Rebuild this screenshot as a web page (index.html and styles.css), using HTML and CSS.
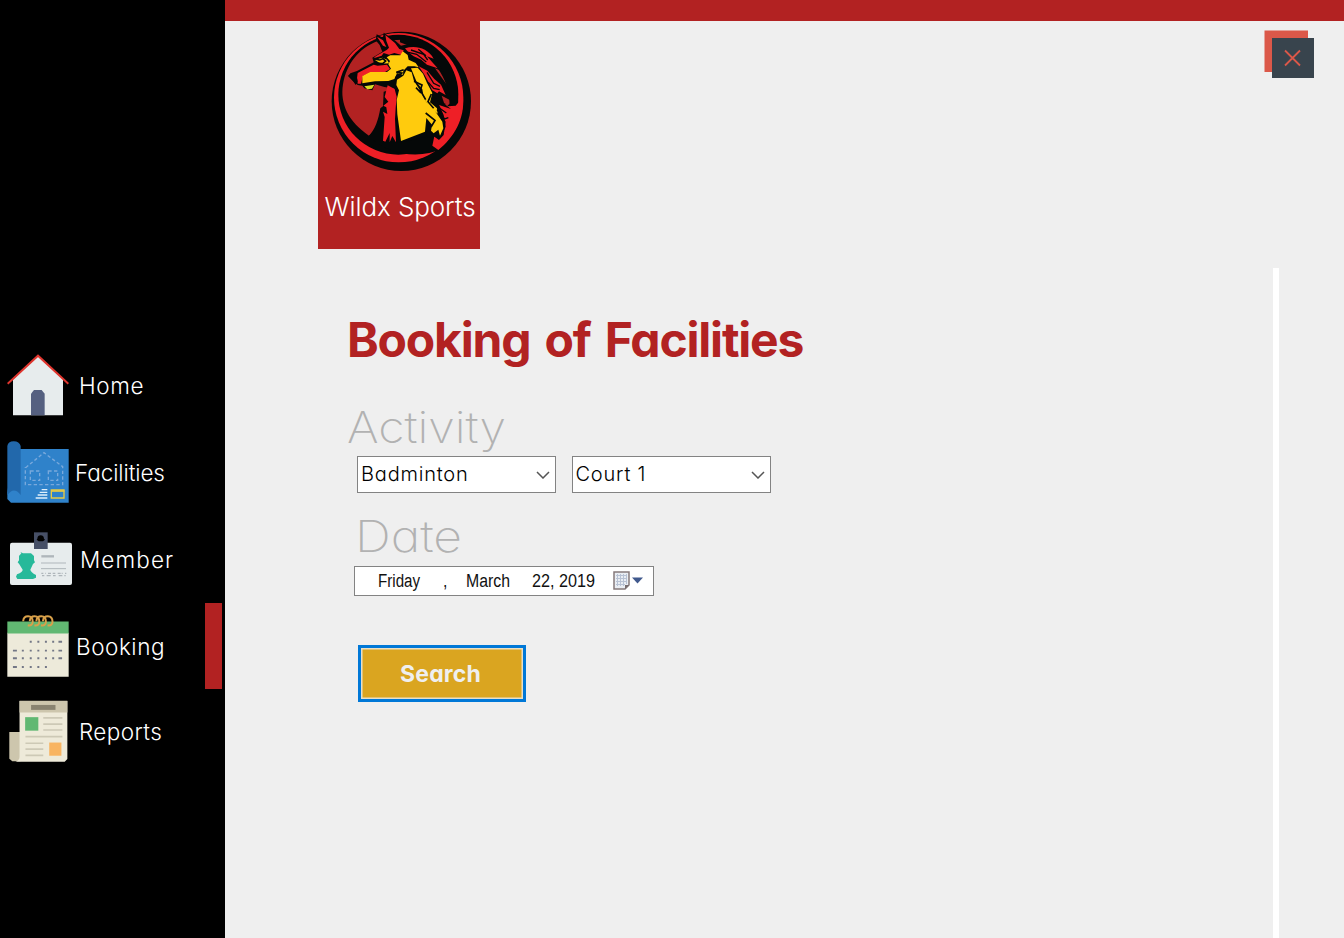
FILE: index.html
```html
<!DOCTYPE html>
<html lang="en">
<head>
<meta charset="utf-8">
<title>Wildx Sports</title>
<link rel="stylesheet" href="styles.css">
</head>
<body>
<div class="app">
  <nav class="sidebar">
    <a class="nav-item home">
      <svg class="nav-icon" viewBox="0 0 186 186"><path fill="#e7eced" d="M18 76 93 6l75 70v108H18z"/><path fill="#556080" d="M72 184v-65l9-11h23l9 11v65z"/><path fill="none" stroke="#df352e" stroke-width="6" d="M2 89 93 5l91 84"/></svg>
      <span class="nav-label">Home</span>
    </a>
    <a class="nav-item facilities">
      <svg class="nav-icon" viewBox="0 0 186 186"><path fill="#2f82ca" d="M20 24h165v161H12L1 174v-20z"/><path fill="#2268ab" d="M1 163V15Q3 1 20 1t21 14v147Q20 135 1 163z"/><g fill="none" stroke="#79a9dc" stroke-width="4" stroke-dasharray="10 7"><path d="M56 80 111 35l56 42v54H55V78"/><path d="M70 90h28v28H70zM124 90h28v28h-28z"/></g><path d="M104 146h17M98 154h23M92 162h29M86 171h35" stroke="#e0f0fc" stroke-width="4"/><path fill="none" stroke="#e9cb43" stroke-width="4" d="M133 147h38v24h-38z"/><path stroke="#e9cb43" stroke-width="5" d="M132 150h40"/></svg>
      <span class="nav-label">Facilities</span>
    </a>
    <a class="nav-item member">
      <svg class="nav-icon" viewBox="0 0 186 160"><rect y="31" width="186" height="127" rx="6" fill="#e7eced"/><path fill="#464f66" d="M72 0h41v50H72z"/><path fill="#000" d="M82 19q1-10 10-10t10 10l3 3-6 5H86l-6-5z"/><path fill="#27b99a" d="m31 59 8 4h24l9 8v13l3 6-6 5-8 17q1 7 17 16v8l-9 4H22l-4-7 3-7q18-8 17-14l-10-16-5-6 4-6V71l7-8z"/><path d="M94 72h38" stroke="#afb6bb" stroke-width="7"/><path d="M93 92h75M93 109h75" stroke="#afb6bb" stroke-width="3"/><path d="M94 123h6m6 0h2m6 0h9m5 0h8m7 0h9m3 0h3m7 0h4M96 130h7m7 0h12m7 0h8m9 0h11m6 0h4" stroke="#afb6bb" stroke-width="4"/></svg>
      <span class="nav-label">Member</span>
    </a>
    <a class="nav-item booking">
      <svg class="nav-icon" viewBox="0 0 186 188"><path fill="#edeada" d="M0 54h186v133H0z"/><path fill="#61b872" d="M0 20h186v36H0z"/><g fill="none" stroke="#d8a04a" stroke-width="6"><path id="ring" d="M48 19q1-15 15-15t14 17q-1 13-15 10"/><use href="#ring" x="20"/><use href="#ring" x="40"/><use href="#ring" x="60"/></g><path d="M68 81h6m17 0h6m17 0h6m16 0h6m13 0h11M17 108h12m15 0h6m18 0h6m17 0h6m17 0h6m16 0h6m13 0h11M17 131h12m15 0h6m18 0h6m17 0h6m17 0h6m16 0h6m13 0h11M17 158h12m15 0h6m18 0h6m17 0h6m17 0h6" stroke="#737786" stroke-width="6"/></svg>
      <span class="nav-label">Booking</span>
      <span class="active-mark"></span>
    </a>
    <a class="nav-item reports">
      <svg class="nav-icon" viewBox="0 0 180 188"><path fill="#cdc6ad" d="M3 97h34v89H12l-9-8z"/><path fill="#eeead9" d="M34 3h145v176l-8 8H22q12-4 12-15z"/><path fill="#cdc6ad" d="M34 2h145v36H34z"/><path fill="#898370" d="M69 15h74v15H69z"/><path fill="#61b872" d="M51 52h40v41H51z"/><path fill="#f8b461" d="M124 129h37v40h-37z"/><path stroke="#cdc9b6" stroke-width="5" d="M106 54h58m-58 19h58m-58 18h58M52 111h112M52 131h54m-54 18h54m-54 19h54"/></svg>
      <span class="nav-label">Reports</span>
    </a>
  </nav>
  <main class="main">
    <header class="top">
      <div class="brand">
        <svg class="logo" viewBox="0 0 456 456">
          <circle cx="229" cy="229" r="209" fill="#050808"/>
          <circle cx="221" cy="218" r="194" fill="#ee1f26"/>
          <circle cx="220" cy="209" r="180" fill="#050808"/>
          <path fill="#b22222" d="M132 332C72 292 44 238 54 178 64 118 100 70 158 48L230 44C300 56 358 98 376 160L386 226 300 300H170z"/>
          <path fill="#050808" d="M225 30C310 40 384 90 398 190L400 240 374 240C372 160 330 90 225 52z"/>
          <path fill="#050808" d="M132 332C150 315 160 285 166 250L174 244 176 200 250 180 340 220 376 250 345 345 350 372C290 400 190 395 132 332z"/>
          <path fill="#ee1f26" d="M330 212 370 244 392 242 414 215C420 280 388 336 340 375L322 362 328 334 346 340 362 305 356 270z"/>
          <path fill="#050808" d="M155 28 174 38 176 23 212 48 228 62C265 52 300 66 325 90L356 140 330 130 366 180 380 228 350 212 358 236 378 252 342 240 336 250 362 290 356 330 342 345 328 335 308 338 300 305 306 335 228 352 218 300 214 210 205 190 178 186 150 178 142 196 118 190 112 182 98 180 86 170 70 154 76 145 96 138 146 112 142 98 172 80 164 60 152 46z"/>
          <path fill="#ee1f26" d="M156 35 174 46 184 66 174 62zM181 30 210 54 223 72 236 76 230 90 208 84 192 89 176 84 170 92 146 100 152 94 186 74 192 68 184 48z"/>
          <path fill="#ee1f26" d="M98 144 146 119 158 122 186 119 195 132 180 141 142 142 114 152 108 176 98 176 96 160z"/>
          <path fill="#ffcb0d" d="M112 153 136 141 186 141 198 131 190 118 195 108 185 97 196 91 226 91 233 79 248 90 251 104 272 114 281 127 268 124 248 124 235 137 234 149 216 145 208 162 190 168 150 169 112 175z"/>
          <path fill="#ffcb0d" d="M216 164 235 152 244 136 260 142 267 168 284 194 304 231 330 258 352 290 355 310 345 332 340 314 326 325 318 317 321 299 304 279 300 320 228 348 217 268 215 225 222 196 214 180z"/>
          <path fill="#ffcb0d" d="M258 130 278 128 294 146 306 174 322 204 315 232 336 250 338 266 313 246 296 218 292 193 276 173z"/>
          <path fill="#ffcb0d" d="M150 105 172 98 186 104 192 115 168 116z"/>
          <path fill="none" stroke="#050808" stroke-width="5" d="M147 102 164 105 174 101 182 108 173 116 160 115M211 159 230 144 214 142 236 134M267 169 291 180 286 196 302 224M273 188 288 204M302 264 330 286 318 306M319 207 309 230 326 250"/>
          <path fill="#ee1f26" d="M240 70C270 60 308 68 326 101L306 94 338 130 306 119 289 104 266 94 250 82zM281 124 307 137 328 162 348 179 362 210 342 199 337 205 321 195 309 169 297 147zM188 181 209 192 215 215 212 250 210 282 213 352 202 333 194 352 194 324 181 350 174 347 179 276 174 260 187 267 184 247 175 242 190 230 179 216z"/>
          <path fill="none" stroke="#050808" stroke-width="4" d="M258 75 296 88 308 105M240 80 275 88 304 111M280 73 303 92M306 142 326 175 345 184M310 172 326 190 344 194M326 218 344 232 361 238M334 242 364 264M336 254 359 282 370 278"/>
          <path fill="#d8dd25" d="M118 184 148 179 141 191 127 193z"/>
          <path fill="#050808" d="M69 152 76 147 95 151 98 170 92 180 84 168z"/>
        </svg>
        <div class="brand-name"><span>Wildx Sports</span></div>
      </div>
      <button class="close" aria-label="Close"><svg viewBox="0 0 50 48"><path fill="#db5849" d="M.5.500h43.500v41.500H.5z"/><path fill="#38444d" d="M8 8h42v40H8z"/><path stroke="#db5849" stroke-width="1.800" d="m21 20.500 15 15m0-15-15 15"/></svg></button>
    </header>
    <section class="content">
      <form class="form">
        <h1 class="title">Booking of Facilities</h1>
        <h2 class="label activity">Activity</h2>
        <div class="selects">
          <div class="select"><span class="badminton">Badminton</span><svg class="chevron" viewBox="0 0 14 8"><path d="m1 1 6 6 6-6"/></svg></div>
          <div class="select"><span class="court">Court 1</span><svg class="chevron" viewBox="0 0 14 8"><path d="m1 1 6 6 6-6"/></svg></div>
        </div>
        <h2 class="label date">Date</h2>
        <div class="datepicker">
          <span class="weekday">Friday</span><span class="comma">,</span><span class="month">March</span><span class="day">22, 2019</span>
          <svg class="calendar" viewBox="0 0 30 20"><path fill="#e9edf3" stroke="#85797b" stroke-width="1.500" d="M1 1h15v13l-4 4H1z"/><path stroke="#b8c2d4" d="M3 4.500h11M3 7.500h11M3 10.500h11M3 13.500h9M4.500 3v12m3-12v12m3-12v12m3-12v10"/><path fill="#766d70" d="M12 18v-4h4z"/><path fill="#40598d" d="M19 6.500h11l-5.500 6z"/></svg>
        </div>
        <button class="search" type="button"><span>Search</span></button>
      </form>
      <div class="rule"></div>
    </section>
  </main>
</div>
</body>
</html>
```
FILE: styles.css
```css
* { box-sizing: border-box; }
body { margin: 0; background: #efefef; font-family: Inter, "Open Sans", sans-serif; font-weight: 300; font-feature-settings: "cv11"; }
.app { display: flex; width: 1344px; height: 938px; overflow: hidden; }
.sidebar { width: 225px; background: #000; padding-top: 341px; display: flex; flex-direction: column; }
.nav-item { height: 87px; display: flex; align-items: center; color: #fff; padding-left: 7px; }
.nav-icon { width: 62px; height: 62px; flex: none; }
.nav-label { font-size: 22.500px; line-height: 30px; white-space: nowrap; margin-top: 2px; letter-spacing: .4px; }
.home .nav-label { margin-left: 10px; letter-spacing: .6px; }
.facilities .nav-label { margin-left: 6px; letter-spacing: -.1px; }
.member { padding-left: 10px; }
.member .nav-label { margin-left: 8px; letter-spacing: 1.100px; }
.member .nav-icon { height: 54px; margin-top: 1px; }
.booking .nav-label { margin-left: 7px; letter-spacing: .55px; }
.active-mark { width: 17px; height: 86px; background: #b22222; margin-left: auto; margin-right: 3px; margin-top: 1px; }
.reports .nav-icon { width: 60px; }
.reports { height: 84px; padding-left: 8px; }
.reports .nav-label { margin-left: 11px; }
.main { flex: 1; display: flex; flex-direction: column; }
.top { height: 249px; border-top: 21px solid #b22222; display: flex; justify-content: space-between; padding: 0 30px 0 93px; }
.brand { width: 162px; height: 228px; background: #b22222; color: #fff; display: flex; flex-direction: column; align-items: center; }
.logo { width: 152px; height: 152px; margin: 4px 0 0 4px; }
.brand-name { margin-top: 14px; padding-left: 2px; font-size: 26px; line-height: 32px; letter-spacing: -.1px; white-space: nowrap; }
.close { width: 50px; height: 48px; margin-top: 9px; padding: 0; border: 0; background: none; }
.close svg { display: block; width: 50px; height: 48px; }
.content { flex: 1; display: flex; justify-content: space-between; padding: 19px 65px 0 122px; }
.rule { width: 6px; background: #fff; }
.form { display: flex; flex-direction: column; align-items: flex-start; }
.title { margin: 42px 0 0; font-size: 48px; line-height: 60px; font-weight: 700; letter-spacing: -1.200px; word-spacing: 4px; color: #b22222; white-space: nowrap; }
.label { margin: 0; font-size: 43px; line-height: 50px; font-weight: 250; color: #b2b2b2; transform-origin: left; }
.activity { margin-top: 32px; transform: scaleX(1.12); }
.selects { display: flex; gap: 15.500px; margin: 4px 0 0 10px; }
.select { width: 199px; height: 37px; background: #fff; border: 1.500px solid #838383; padding: 0 5px 2px 3px; display: flex; justify-content: space-between; align-items: center; font-size: 20px; line-height: 28px; letter-spacing: .8px; color: #000; }
.chevron { width: 14px; height: 8px; margin-top: 3px; fill: none; stroke: #555; stroke-width: 1.500; }
.date { margin: 18px 0 0 8px; transform: scaleX(1.16); }
.datepicker { width: 300px; height: 30px; margin: 5px 0 0 7px; border: 1.500px solid #838383; background: #fff; display: flex; align-items: center; font: 400 17.600px/26px "Liberation Sans", sans-serif; color: #111; padding-left: 23px; }
.datepicker span { transform: scaleX(.9); transform-origin: left; white-space: nowrap; flex: none; }
.datepicker .weekday { width: 65px; transform: scaleX(.86); }
.comma { width: 23px; }
.month { width: 66px; }
.datepicker .day { width: 81px; transform: scaleX(.92); }
.calendar { width: 30px; height: 20px; }
.search { width: 168px; height: 57px; margin: 49px 0 0 11px; padding: 0 3px 0 0; border: 3px solid #0078d7; background: #daa520; box-shadow: inset 0 0 0 1.500px #e9dfc5; color: #efefef; font: 700 23px/30px Inter, sans-serif; font-feature-settings: "cv11"; letter-spacing: .15px; }
```
